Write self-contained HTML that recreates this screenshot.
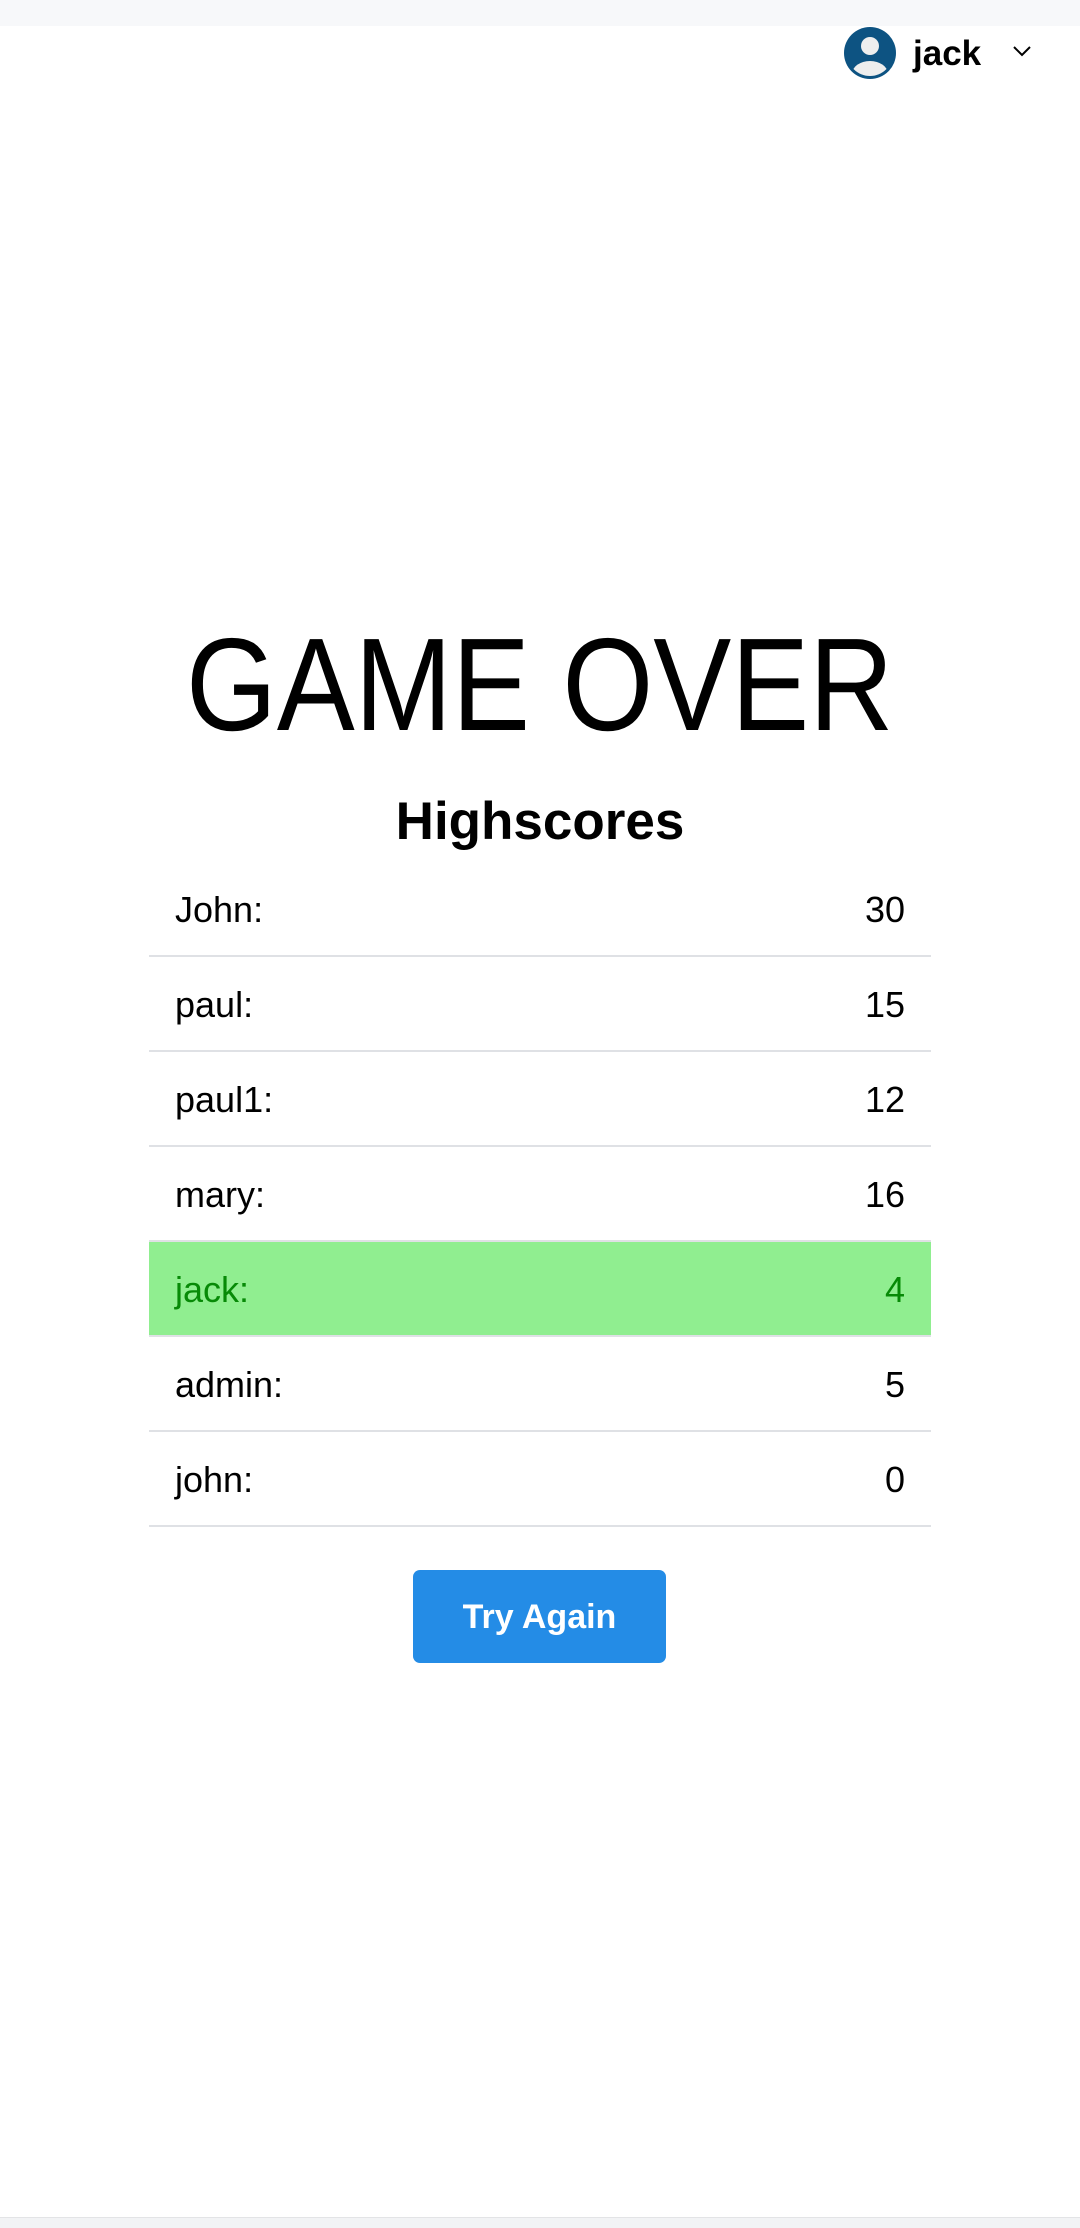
<!DOCTYPE html>
<html><head><meta charset="utf-8"><style>
html,body{margin:0;padding:0;background:#fff;}
body{width:1080px;height:2227px;position:relative;overflow:hidden;font-family:"Liberation Sans",Arial,sans-serif;color:#000;}
.top{position:absolute;left:0;top:0;width:1080px;height:26px;background:#f7f8fa;}
.name{position:absolute;left:913px;top:31px;font-size:35px;font-weight:bold;line-height:46px;}
.go{position:absolute;left:0;width:1080px;top:617px;text-align:center;font-size:132px;line-height:136px;}
.go span{display:inline-block;transform:scaleX(0.885);}
.hs{position:absolute;left:0;width:1080px;top:787px;text-align:center;font-size:53px;font-weight:bold;line-height:70px;}
.row{position:absolute;left:149px;width:782px;height:93px;border-bottom:2px solid #dfe1e5;font-size:36px;line-height:95px;}
.row .l{position:absolute;left:26px;}
.row .r{position:absolute;right:26px;}
.g{background:#90ee90;color:#078a07;}
.btn{position:absolute;left:413px;top:1570px;width:253px;height:93px;background:#248ce6;border-radius:7px;color:#fff;font-weight:bold;font-size:34px;line-height:95px;text-align:center;}
.bot{position:absolute;left:0;top:2217px;width:1080px;height:10px;background:#f2f3f5;border-top:1px solid #e3e4e6;}
</style></head><body>
<div class="top"></div>
<svg style="position:absolute;left:843px;top:26px" width="54" height="54" viewBox="0 0 54 54">
<defs><clipPath id="c"><circle cx="27" cy="27" r="23"/></clipPath></defs>
<circle cx="27" cy="27" r="26" fill="#0d5382"/>
<g clip-path="url(#c)" fill="#eeeeee">
<circle cx="27" cy="20" r="9"/>
<ellipse cx="27" cy="48" rx="18" ry="13"/>
</g>
</svg>
<div class="name">jack</div>
<svg style="position:absolute;left:1012px;top:44px" width="20" height="14" viewBox="0 0 20 14"><path d="M2 3 L10 11 L18 3" fill="none" stroke="#000" stroke-width="2"/></svg>
<div class="go"><span>GAME OVER</span></div>
<div class="hs">Highscores</div>
<div class="row" style="top:862px"><span class="l">John:</span><span class="r">30</span></div>
<div class="row" style="top:957px"><span class="l">paul:</span><span class="r">15</span></div>
<div class="row" style="top:1052px"><span class="l">paul1:</span><span class="r">12</span></div>
<div class="row" style="top:1147px"><span class="l">mary:</span><span class="r">16</span></div>
<div class="row g" style="top:1242px"><span class="l">jack:</span><span class="r">4</span></div>
<div class="row" style="top:1337px"><span class="l">admin:</span><span class="r">5</span></div>
<div class="row" style="top:1432px"><span class="l">john:</span><span class="r">0</span></div>
<div class="btn">Try Again</div>
<div class="bot"></div>
</body></html>
